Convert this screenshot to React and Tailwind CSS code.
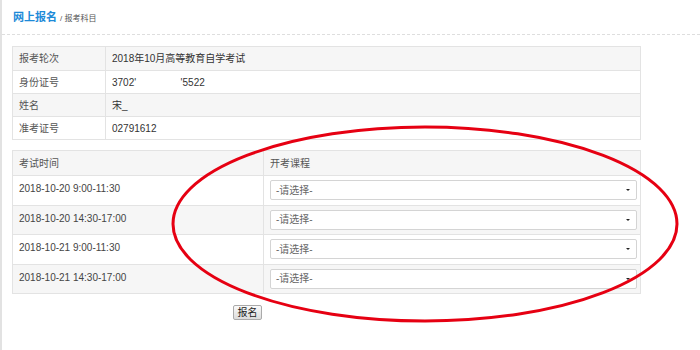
import React from "react";

const font = { fontFamily: '"Liberation Sans", "Noto Sans CJK SC", sans-serif' };

const info = [
  ["报考轮次", "2018年10月高等教育自学考试"],
  ["身份证号", "3702'                '5522"],
  ["姓名", "宋_"],
  ["准考证号", "02791612"],
];

const exams = [
  "2018-10-20 9:00-11:30",
  "2018-10-20 14:30-17:00",
  "2018-10-21 9:00-11:30",
  "2018-10-21 14:30-17:00",
];

const Select = () => (
  <div className="ml-[6px] mt-[4px] flex h-[20px] w-[367px] items-center justify-between rounded-[2px] border border-[#d4d4d4] bg-white pl-[5px] pr-[6px] text-[10px] text-[#666]">
    <span>-请选择-</span>
    <span className="h-0 w-0 border-x-[2px] border-t-[2px] border-x-transparent border-t-[#222]" />
  </div>
);

export default function App() {
  return (
    <div className="relative h-[350px] w-[700px] overflow-hidden border-l-2 border-[#e2e2e2] bg-white text-[#444]" style={font}>
      <div className="flex h-[35px] items-end border-b border-dashed border-[#dedede] pb-[11px] pl-[11px]">
        <span className="text-[11px] font-bold leading-none text-[#1d8ad8]">网上报名</span>
        <span className="ml-[3px] text-[8px] leading-none text-[#555]">/ 报考科目</span>
      </div>

      <div className="pl-[10px] pt-[11px]">
        <div className="w-[629px] border border-[#e3e3e3] text-[10px]">
          {info.map(([k, v], i) => (
            <div
              key={k}
              className={
                "flex h-[23px] items-center " +
                (i > 0 ? "border-t border-[#e3e3e3] " : "") +
                (i % 2 === 0 ? "bg-[#f6f6f6]" : "bg-white")
              }
            >
              <div className="flex h-full w-[93px] items-center border-r border-[#e3e3e3] pl-[6px] text-[#555]">{k}</div>
              <div className="whitespace-pre pl-[6px] text-[#333]">{v}</div>
            </div>
          ))}
        </div>

        <div className="mt-[10px] w-[629px] border border-[#e3e3e3] text-[10px]">
          <div className="flex h-[24px] items-center bg-[#f6f6f6]">
            <div className="flex h-full w-[251px] items-center border-r border-[#e3e3e3] pl-[6px] text-[#555]">考试时间</div>
            <div className="pl-[6px] text-[#555]">开考课程</div>
          </div>
          {exams.map((t, i) => (
            <div
              key={t}
              className={
                "flex h-[29.5px] border-t border-[#e3e3e3] " +
                (i % 2 === 0 ? "bg-white" : "bg-[#f6f6f6]")
              }
            >
              <div className="h-full w-[251px] border-r border-[#e3e3e3] pl-[6px] pt-[6px] leading-[14px] text-[#444]">{t}</div>
              <Select />
            </div>
          ))}
        </div>

        <div className="ml-[221px] mt-[11px]">
          <button className="flex h-[15px] w-[29px] items-center justify-center rounded-[2px] border border-[#aaa] bg-gradient-to-b from-[#fafafa] to-[#dcdcdc] text-[10px] leading-none text-[#222]">
            报名
          </button>
        </div>
      </div>

      <svg className="pointer-events-none absolute left-0 top-0" width="700" height="350">
        <ellipse cx="423" cy="224" rx="252" ry="97" fill="none" stroke="#e60012" strokeWidth="3" />
      </svg>
    </div>
  );
}
